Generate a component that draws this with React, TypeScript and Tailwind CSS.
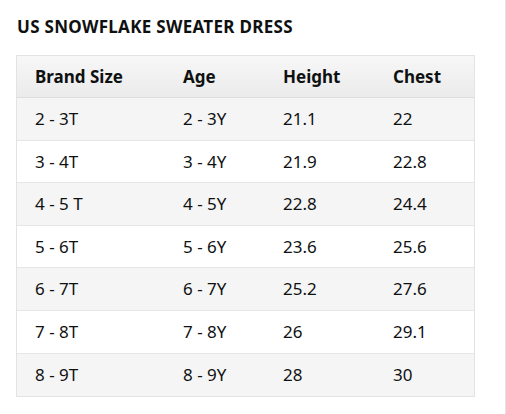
import React from "react";

const rows = [
  ["2 - 3T", "2 - 3Y", "21.1", "22"],
  ["3 - 4T", "3 - 4Y", "21.9", "22.8"],
  ["4 - 5 T", "4 - 5Y", "22.8", "24.4"],
  ["5 - 6T", "5 - 6Y", "23.6", "25.6"],
  ["6 - 7T", "6 - 7Y", "25.2", "27.6"],
  ["7 - 8T", "7 - 8Y", "26", "29.1"],
  ["8 - 9T", "8 - 9Y", "28", "30"],
];

export default function App() {
  return (
    <div
      className="relative w-[506px] h-[414px] bg-white text-[#0f1111] overflow-hidden"
      style={{ fontFamily: '"Noto Sans", "Open Sans", Arial, sans-serif' }}
    >
      <div className="absolute right-0 top-0 h-full w-px bg-[#e3e3e3]" />
      <div className="pl-[17px] pt-[16px]">
        <h2 className="text-[17px] font-bold leading-[22px] tracking-[0.3px]">US SNOWFLAKE SWEATER DRESS</h2>
      </div>
      <div className="ml-[16px] mt-[17px] w-[459px] border border-[#e3e3e3]">
        <div className="grid grid-cols-[148px_100px_110px_1fr] h-[42px] items-center pl-[18px] bg-gradient-to-b from-[#f7f7f7] to-[#ebebeb] border-b border-[#dddddd] text-[17px] font-bold">
          <div>Brand Size</div>
          <div>Age</div>
          <div>Height</div>
          <div>Chest</div>
        </div>
        {rows.map((r, i) => (
          <div
            key={i}
            className={
              i % 2 === 0
                ? "grid grid-cols-[148px_100px_110px_1fr] h-[42.6px] items-center pl-[18px] text-[17px] bg-[#f5f5f5] border-b border-[#e6e6e6] last:border-b-0"
                : "grid grid-cols-[148px_100px_110px_1fr] h-[42.6px] items-center pl-[18px] text-[17px] bg-white border-b border-[#e6e6e6] last:border-b-0"
            }
          >
            {r.map((c, j) => (
              <div key={j}>{c}</div>
            ))}
          </div>
        ))}
      </div>
    </div>
  );
}
